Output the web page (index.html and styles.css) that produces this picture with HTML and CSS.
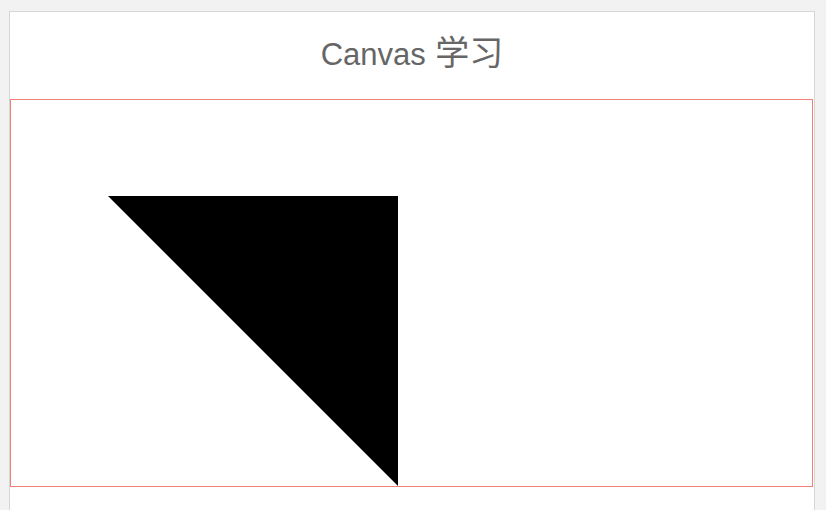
FILE: index.html
```html
<!DOCTYPE html>
<html lang="zh">
<head>
<meta charset="utf-8">
<title>Canvas 学习</title>
<link rel="stylesheet" href="styles.css">
</head>
<body>
<div class="page">
  <div class="card">
    <header class="card-header">Canvas <span class="cjk">学习</span></header>
    <div class="canvas-box">
      <svg class="drawing" width="801" height="386" viewBox="0 0 801 386">
        <polygon points="97,96 387,96 387,386" fill="#000"/>
      </svg>
    </div>
  </div>
</div>
</body>
</html>
```
FILE: styles.css
```css
html, body {
  margin: 0;
  padding: 0;
  background: #f2f2f2;
  height: 100%;
  overflow: hidden;
}
.page {
  padding: 11px 0 0 9px;
}
.card {
  width: 804px;
  height: 520px;
  background: #fff;
  border: 1px solid #d6d6d6;
  border-bottom: none;
}
.card-header {
  box-sizing: border-box;
  height: 87px;
  padding-top: 22px;
  text-align: center;
  font-family: "Liberation Sans", "Noto Sans CJK SC", sans-serif;
  font-size: 31px;
  line-height: 34px;
  color: #666;
}
.cjk {
  font-family: "Noto Sans CJK SC", sans-serif;
  font-size: 34px;
  line-height: 1;
  margin-left: 1px;
}
.canvas-box {
  width: 801px;
  height: 386px;
  border: 1px solid #f08077;
}
.drawing {
  display: block;
}
```
